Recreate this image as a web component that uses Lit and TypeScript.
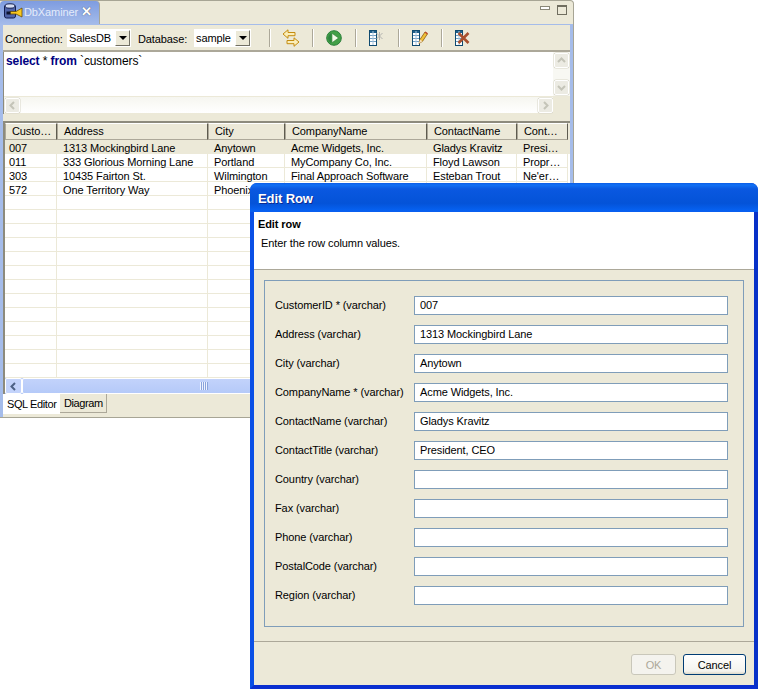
import { LitElement, html, css, svg } from "lit";
import { customElement } from "lit/decorators.js";

const cols = [52, 151, 77, 142, 90, 51];
const heads = ["Custo…", "Address", "City", "CompanyName", "ContactName", "Cont…"];
const rows = [
  ["007", "1313 Mockingbird Lane", "Anytown", "Acme Widgets, Inc.", "Gladys Kravitz", "Presi…"],
  ["011", "333 Glorious Morning Lane", "Portland", "MyCompany Co, Inc.", "Floyd Lawson", "Propr…"],
  ["303", "10435 Fairton St.", "Wilmington", "Final Approach Software", "Esteban Trout", "Ne'er…"],
  ["572", "One Territory Way", "Phoenix", "", "", ""],
  ...Array.from({ length: 13 }, () => ["", "", "", "", "", ""]),
];
const fields = [
  ["CustomerID * (varchar)", "007"],
  ["Address (varchar)", "1313 Mockingbird Lane"],
  ["City (varchar)", "Anytown"],
  ["CompanyName * (varchar)", "Acme Widgets, Inc."],
  ["ContactName (varchar)", "Gladys Kravitz"],
  ["ContactTitle (varchar)", "President, CEO"],
  ["Country (varchar)", ""],
  ["Fax (varchar)", ""],
  ["Phone (varchar)", ""],
  ["PostalCode (varchar)", ""],
  ["Region (varchar)", ""],
];

const appIcon = html`<svg class="noshrink" width="20" height="17" viewBox="0 0 20 17">
  <rect x=".5" y="2" width="11" height="13" rx="2" fill="#4f64a8" stroke="#141f50"/>
  <ellipse cx="6" cy="3" rx="5" ry="2.200" fill="#d4ddf4" stroke="#141f50"/>
  <path d="M6 8.500h6l6-3.500v9l-6-3H6z" fill="#f8c820" stroke="#6a4c00" stroke-width=".8"/>
  <rect x="2.500" y="8.500" width="4" height="3" fill="#0e1430"/>
</svg>`;
const arrows = html`<svg width="18" height="18" viewBox="0 0 18 18" fill="#fbeeb8" stroke="#c48c10" stroke-linejoin="round">
  <path d="M1 5 6 .8v2.700h7v3.200H6v2.600z"/><path d="M17 13l-5-4.200v2.700H5v3.200h7v2.600z"/>
</svg>`;
const run = html`<svg width="16" height="16" viewBox="0 0 16 16">
  <circle cx="8" cy="8" r="7.300" fill="#43a047" stroke="#2a7f3a"/>
  <path d="M2 8a6 6 0 0 1 3-5v10a6 6 0 0 1-3-5z" fill="#2e8540"/>
  <path d="M6 3.300 12.500 8 6 12.700z" fill="#f4fbe8" stroke="#1f6a2a" stroke-width=".5"/>
</svg>`;
const sheet = svg`<rect x=".5" y=".5" width="7" height="15" fill="#fff" stroke="#0f4a70"/>
  <rect x="1" y="1" width="6" height="2" fill="#1e5f8a"/>
  <path d="M1 5.500h6M1 8.500h6M1 11.500h6" stroke="#6f9fc4"/><path d="M4 1v14" stroke="#a8c4dc"/>`;
const insertIcon = html`<svg width="16" height="16" viewBox="0 0 16 16">${sheet}
  <path d="M10.500 2v8M7.500 3l6 6M13.500 3l-6 6" stroke="#b4b4b0"/></svg>`;
const editIcon = html`<svg width="16" height="16" viewBox="0 0 16 16">${sheet}
  <path d="M7 13.500l1-4 5-7.500 2.500 1.800-5 7.500z" fill="#f0c038" stroke="#8a5a10" stroke-width=".8"/>
  <path d="M7 13.500l1-4 2.400 1.800z" fill="#f6e0c0"/>
  <path d="M13 2l2.500 1.800" stroke="#c04a30" stroke-width="1.500"/></svg>`;
const deleteIcon = html`<svg width="16" height="16" viewBox="0 0 16 16">${sheet}
  <path d="M3.500 3l10 10M13.500 3l-10 10" stroke="#a8502f" stroke-width="2.600"/></svg>`;

const chev = (p: string, c: string) => html`<svg width="9" height="9" viewBox="0 0 9 9"><path d="${p}" fill="none" stroke="${c}" stroke-width="2"/></svg>`;
const LEFT = "M6 1 2.500 4.500 6 8", RIGHT = "M3 1l3.500 3.500L3 8", UP = "M1 6l3.500-3.500L8 6", DOWN = "M1 3l3.500 3.500L8 3";

@customElement("app-root")
export class AppRoot extends LitElement {
  static styles = css`
    :host { display: block; position: relative; width: 758px; height: 689px; background: #fff; overflow: hidden;
      font: 11px/14px "Liberation Sans", Arial, sans-serif; letter-spacing: -0.1px; color: #000; }
    * { box-sizing: border-box; }
    .noshrink { flex: none; }
    .win { width: 574px; height: 418px; background: #ece9d8; display: flex; flex-direction: column;
      border-right: 1px solid #a7a595; border-bottom: 1px solid #a7a595; border-top: 1px solid #a7a595; border-radius: 0 4px 0 0; }
    .tabbar { height: 24px; display: flex; justify-content: space-between; flex: none; }
    .tab { width: 100px; height: 24px; background: linear-gradient(#7e9ce0, #a5bcea); border-radius: 4px 4px 0 0; display: flex; align-items: center; padding: 0 0 3px 4px;
      color: #e4ebfa; border-right: 1px solid #a7a595; }
    .tab .t { width: 57px; flex: none; white-space: nowrap; }
    .tab .x { color: #fff; font-weight: bold; font-size: 13px; text-shadow: 0 0 1px #334; }
    .wctl { display: flex; gap: 7px; padding: 4px 6px 0 0; }
    .wmin { width: 10px; height: 4px; border: 1px solid #8a8878; margin-top: 1px; background: #fff; }
    .wmax { width: 10px; height: 10px; border: 1px solid #706e60; border-top-width: 2px; background: #ece9d8; }
    .frame { flex: 1; display: flex; flex-direction: column; border: solid #a5bcea; border-width: 1px 3px 0 3px; min-height: 0; margin-top: -1px; }
    .toolbar { height: 27px; display: flex; align-items: center; padding-left: 2px; flex: none; border-bottom: 2px solid #aca899; }
    .lbl { padding-top: 2px; }
    .combo { height: 20px; background: #fff; display: flex; align-items: center; padding: 1px 0 0 3px; box-shadow: inset 0 0 0 1px #ece9d8; }
    .btn-drop { width: 15px; height: 16px; margin: 0 2px 1px 0; background: #ece9d8; border: 1px solid; border-color: #fff #716f64 #716f64 #fff; display: flex; align-items: center; justify-content: center; }
    .btn-drop::after { content: ""; border: 4px solid transparent; border-top: 4px solid #000; border-bottom: 0; }
    .sep { width: 1px; height: 18px; background: #aca899; box-shadow: 1px 0 #fff; flex: none; }
    .ico { width: 42px; height: 20px; display: flex; justify-content: center; align-items: center; flex: none; }
    .editor { height: 62px; display: grid; grid-template-columns: 1fr 17px; flex: none; margin-left: 0; border-left: 1px solid #8d8b7d; }
    .sql { background: #fff; padding: 2px 1px 0 2px; font-size: 12px; height: 44px; }
    .sql b { color: #000080; }
    .vs { height: 44px; background: #f8f8f3; display: flex; flex-direction: column; justify-content: space-between; padding: 1px 0 1px 1px; }
    .hs { height: 16px; background: linear-gradient(#f6f6f0, #fff); display: flex; justify-content: space-between; padding-left: 1px; padding-top: 1px; }
    .sb { width: 15px; height: 15px; border: 1px solid #fff; background: #ecebe3; border-radius: 2px; display: flex; align-items: center; justify-content: center; box-shadow: 0 0 0 .5px #d8d6c8; }
    .corner { background: #ece9d8; }
    .gap { height: 9px; flex: none; border-bottom: 2px solid #8d8b7d; }
    .main { border-left: 2px solid #8d8b7d; margin-left: 0; flex: none; }
    .thead, .tr { display: flex; }
    .thead { height: 17px; }
    .th { height: 17px; padding: 0 0 0 6px; background: #ece9d8; border: 1px solid; border-color: #fff #5e5c50 #aca899 #aca899; overflow: hidden; white-space: nowrap; line-height: 14px; flex: none; }
    .tr { height: 14px; background: #fff; }
    .tr.sel { background: #ece9d8; }
    .td { height: 14px; padding: 2px 0 0 6px; border-right: 1px solid #ece9d8; border-bottom: 1px solid #ece9d8; white-space: nowrap; line-height: 13px; flex: none; }
    .td:first-child { padding-left: 4px; }
    .tbar { height: 16px; display: flex; background: linear-gradient(#c3d3fb, #b4c9f8); }
    .sb2 { width: 17px; height: 16px; background: #c3d3fb; border: 1px solid #fff; border-radius: 2px; display: flex; align-items: center; justify-content: center; flex: none; }
    .thumb { flex: 1; display: flex; align-items: center; justify-content: center; padding-right: 184px; border: 1px solid #fff; border-radius: 2px; }
    .grip { width: 8px; height: 8px; background: repeating-linear-gradient(90deg, #eef3ff 0 1px, #8aa3dc 1px 2px); }
    .btabs { display: flex; height: 20px; flex: none; align-items: flex-start; letter-spacing: -0.4px; }
    .bt { width: 47px; padding: 1px 0 0 4px; height: 19px; border-right: 1px solid #aca899; border-bottom: 1px solid #aca899; line-height: 16px; white-space: nowrap; }
    .bt.on { width: 57px; background: #fff; border: 0; height: 20px; padding: 2px 0 0 4px; }
    .dlg { position: absolute; left: 250px; top: 183px; width: 508px; height: 506px; border-radius: 7px 7px 0 0;
      display: flex; flex-direction: column; border: solid; border-color: transparent #0831c8 #0a2fd0 #0a50e6; border-width: 0 4px 4px 4px; background: #0a50e6; }
    .title { height: 29px; margin: 0 -4px; padding: 7px 8px 0; border-radius: 7px 7px 0 0; color: #fff; font-weight: bold; font-size: 13px; line-height: 18px; text-shadow: 1px 1px #0a2a90;
      background: linear-gradient(#0a5ce6 0, #1170f4 2px, #0a58e0 6px, #0453d8 70%, #0660ef 92%, #0a5ef0 100%); flex: none; }
    .hdr { background: #fff; height: 58px; padding: 5px 4px 0; border-bottom: 1px solid #aca899; flex: none; }
    .hdr b { display: block; line-height: 14px; }
    .hdr p { margin: 5px 0 0 3px; line-height: 14px; }
    .body { flex: 1; background: #ece9d8; display: flex; flex-direction: column; }
    .group { margin: 10px 10px 14px 10px; border: 1px solid #7f9db9; padding: 15px 15px 20px 10px; display: grid; grid-template-columns: 139px 314px; grid-auto-rows: 19px; row-gap: 10px; align-items: start; height: 347px; }
    .inp { height: 19px; border: 1px solid #7f9db9; background: #fff; padding: 1px 0 0 5px; line-height: 15px; }
    .glbl { line-height: 19px; }
    .foot { border-top: 1px solid #aca899; flex: 1; display: flex; justify-content: flex-end; gap: 7px; padding: 12px 8px 0 0; }
    .b { height: 21px; border-radius: 3px; display: flex; align-items: center; justify-content: center; }
    .ok { width: 45px; border: 1px solid #c9c7ba; background: #f4f3ee; color: #aca899; }
    .cancel { width: 63px; border: 1px solid #003c74; background: linear-gradient(#fff, #f4f3ee 85%, #dcd8c8); }
    .w-conn { width: 61px; }
    .w-db { width: 55px; margin-left: 6px; }
    .c-conn { width: 66px; }
    .c-db { width: 59px; }
    .fill { flex: 1; }
    .sep.first { margin-left: 17px; }
  `;
  render() {
    return html`
      <div class="win">
        <div class="tabbar">
          <div class="tab">${appIcon}<span class="t">DbXaminer</span><span class="x">✕</span></div>
          <div class="wctl"><div class="wmin"></div><div class="wmax"></div></div>
        </div>
        <div class="frame">
          <div class="toolbar">
            <span class="lbl w-conn">Connection:</span>
            <div class="combo c-conn"><span class="fill">SalesDB</span><div class="btn-drop"></div></div>
            <span class="lbl w-db">Database:</span>
            <div class="combo c-db"><span class="fill">sample</span><div class="btn-drop"></div></div>
            <div class="sep first"></div>
            <div class="ico">${arrows}</div><div class="sep"></div>
            <div class="ico">${run}</div><div class="sep"></div>
            <div class="ico">${insertIcon}</div><div class="sep"></div>
            <div class="ico">${editIcon}</div><div class="sep"></div>
            <div class="ico">${deleteIcon}</div>
          </div>
          <div class="editor">
            <div class="sql"><b>select</b> * <b>from</b> \`customers\`</div>
            <div class="vs"><div class="sb">${chev(UP, "#c4c4b8")}</div><div class="sb">${chev(DOWN, "#c4c4b8")}</div></div>
            <div class="hs"><div class="sb">${chev(LEFT, "#c4c4b8")}</div><div class="sb">${chev(RIGHT, "#c4c4b8")}</div></div>
            <div class="corner"></div>
          </div>
          <div class="gap"></div>
          <div class="main">
            <div class="thead">${heads.map((h, i) => html`<div class="th" style="width:${cols[i]}px">${h}</div>`)}</div>
            ${rows.map((r, ri) => html`<div class="tr ${ri === 0 ? "sel" : ""}">${r.map((c, i) => html`<div class="td" style="width:${cols[i]}px">${c}</div>`)}</div>`)}
            <div class="tbar"><div class="sb2">${chev(LEFT, "#4d6185")}</div><div class="thumb"><div class="grip"></div></div></div>
          </div>
          <div class="btabs"><div class="bt on">SQL Editor</div><div class="bt">Diagram</div></div>
        </div>
      </div>
      <div class="dlg">
        <div class="title">Edit Row</div>
        <div class="hdr"><b>Edit row</b><p>Enter the row column values.</p></div>
        <div class="body">
          <div class="group">
            ${fields.map(([l, v]) => html`<div class="glbl">${l}</div><div class="inp">${v}</div>`)}
          </div>
          <div class="foot"><div class="b ok">OK</div><div class="b cancel">Cancel</div></div>
        </div>
      </div>`;
  }
}
